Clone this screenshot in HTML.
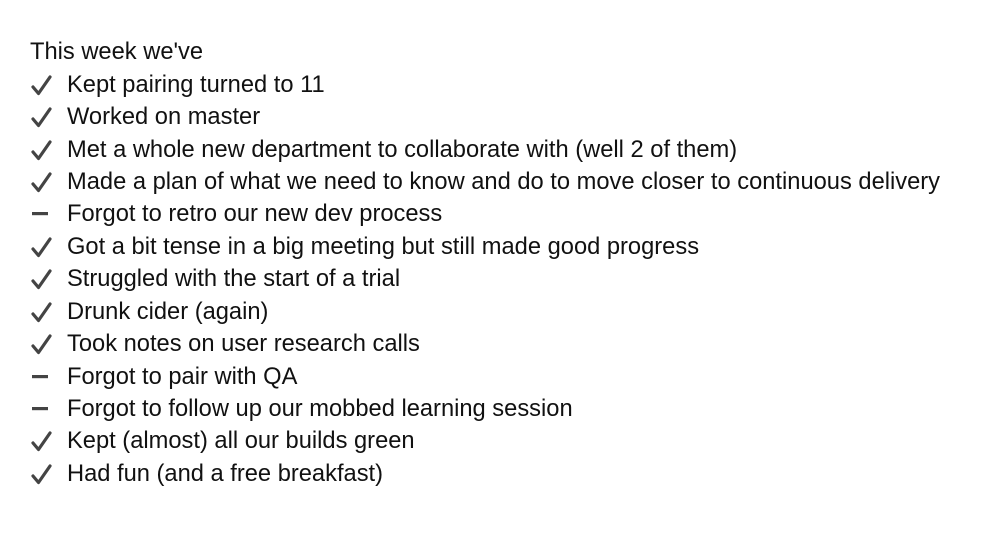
<!DOCTYPE html>
<html><head><style>
body{margin:0;width:1000px;height:545px;background:#fff;font-family:"Liberation Sans",Arial,sans-serif;font-size:23.7px;color:#111;position:relative;overflow:hidden}
.l{position:absolute;left:67px;height:32px;line-height:32px;white-space:nowrap}
.h{left:30px}
svg{position:absolute;left:-37px;top:0}
</style></head><body>
<div class="l h" style="top:36px">This week we've</div>
<div class="l" style="top:69px"><svg width="24" height="32"><path d="M3 18 L8.5 24.5 L20 8" fill="none" stroke="#444" stroke-width="3.2" stroke-linecap="round" stroke-linejoin="round"/></svg>Kept pairing turned to 11</div>
<div class="l" style="top:101px"><svg width="24" height="32"><path d="M3 18 L8.5 24.5 L20 8" fill="none" stroke="#444" stroke-width="3.2" stroke-linecap="round" stroke-linejoin="round"/></svg>Worked on master</div>
<div class="l" style="top:134px"><svg width="24" height="32"><path d="M3 18 L8.5 24.5 L20 8" fill="none" stroke="#444" stroke-width="3.2" stroke-linecap="round" stroke-linejoin="round"/></svg>Met a whole new department to collaborate with (well 2 of them)</div>
<div class="l" style="top:166px"><svg width="24" height="32"><path d="M3 18 L8.5 24.5 L20 8" fill="none" stroke="#444" stroke-width="3.2" stroke-linecap="round" stroke-linejoin="round"/></svg>Made a plan of what we need to know and do to move closer to continuous delivery</div>
<div class="l" style="top:198px"><svg width="24" height="32"><rect x="2" y="14" width="16" height="3.2" fill="#444"/></svg>Forgot to retro our new dev process</div>
<div class="l" style="top:231px"><svg width="24" height="32"><path d="M3 18 L8.5 24.5 L20 8" fill="none" stroke="#444" stroke-width="3.2" stroke-linecap="round" stroke-linejoin="round"/></svg>Got a bit tense in a big meeting but still made good progress</div>
<div class="l" style="top:263px"><svg width="24" height="32"><path d="M3 18 L8.5 24.5 L20 8" fill="none" stroke="#444" stroke-width="3.2" stroke-linecap="round" stroke-linejoin="round"/></svg>Struggled with the start of a trial</div>
<div class="l" style="top:296px"><svg width="24" height="32"><path d="M3 18 L8.5 24.5 L20 8" fill="none" stroke="#444" stroke-width="3.2" stroke-linecap="round" stroke-linejoin="round"/></svg>Drunk cider (again)</div>
<div class="l" style="top:328px"><svg width="24" height="32"><path d="M3 18 L8.5 24.5 L20 8" fill="none" stroke="#444" stroke-width="3.2" stroke-linecap="round" stroke-linejoin="round"/></svg>Took notes on user research calls</div>
<div class="l" style="top:361px"><svg width="24" height="32"><rect x="2" y="14" width="16" height="3.2" fill="#444"/></svg>Forgot to pair with QA</div>
<div class="l" style="top:393px"><svg width="24" height="32"><rect x="2" y="14" width="16" height="3.2" fill="#444"/></svg>Forgot to follow up our mobbed learning session</div>
<div class="l" style="top:425px"><svg width="24" height="32"><path d="M3 18 L8.5 24.5 L20 8" fill="none" stroke="#444" stroke-width="3.2" stroke-linecap="round" stroke-linejoin="round"/></svg>Kept (almost) all our builds green</div>
<div class="l" style="top:458px"><svg width="24" height="32"><path d="M3 18 L8.5 24.5 L20 8" fill="none" stroke="#444" stroke-width="3.2" stroke-linecap="round" stroke-linejoin="round"/></svg>Had fun (and a free breakfast)</div>
</body></html>
